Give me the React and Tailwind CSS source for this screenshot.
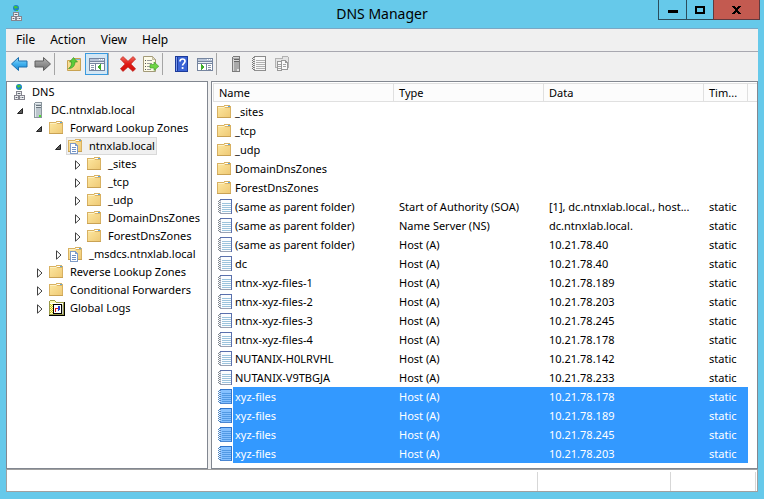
import { useState } from "react";

/* ---------- icons ---------- */

function Icon({ w = 16, h = 16, crisp = true, children }) {
  return (
    <svg
      width={w}
      height={h}
      viewBox={`0 0 ${w} ${h}`}
      shapeRendering={crisp ? "crispEdges" : "auto"}
      className="block shrink-0"
      aria-hidden="true"
    >
      {children}
    </svg>
  );
}

function FolderShape() {
  return (
    <>
      <path d="M0 1h7V0h6v1h1v12H0z" fill="#d8b162" />
      <path d="M1 2h6V1h6v11H1z" fill="url(#folderFill)" />
      <rect x="8" y="1" width="3" height="1" fill="#fff" />
      <rect x="11" y="1" width="2" height="1" fill="#5aa5e0" />
      <rect x="1" y="2" width="6" height="1" fill="#fdf0c0" />
      <rect x="8" y="2" width="5" height="1" fill="#dcb360" />
      <rect x="0" y="12" width="14" height="1" fill="#c9a254" />
    </>
  );
}

function FolderIcon() {
  return (
    <Icon>
      <g transform="translate(0 1)">
        <FolderShape />
      </g>
    </Icon>
  );
}

function ZoneIcon() {
  return (
    <Icon>
      <g transform="translate(0 1)">
        <FolderShape />
      </g>
      <path d="M2 5h6v1h1v1h1v9H2z" fill="#7f9cc8" />
      <path d="M3 6h4v2h2v7H3z" fill="#fff" />
      <path d="M4 9h4v1H4zM4 11h4v1H4zM4 13h4v1H4z" fill="#6d8fc4" />
    </Icon>
  );
}

function NetworkIcon() {
  return (
    <Icon>
      <circle cx="8" cy="3" r="3" fill="#1c84c4" shapeRendering="auto" />
      <path d="M6 1h3v1h1v1H8v1H7V3H6zM8 5h2v1H8z" fill="#42bf3f" />
      <path d="M5 7h6v5H5zM3 11h5v5H3zM8 11h6v5H8z" fill="#85858f" />
      <path d="M6 8h4v3H6zM4 12h3v3H4zM9 12h4v3H9z" fill="#eff0f2" />
      <path d="M6 9h4v1H6zM4 13h3v1H4zM9 13h4v1H9z" fill="#b6bac2" />
      <path d="M7 9h2v1H7zM5 13h1v1H5zM11 13h1v1h-1z" fill="#5e6670" />
    </Icon>
  );
}

function ServerIcon({ gray = false }) {
  return (
    <Icon>
      <path d="M5 0h7v16H4V1h1z" fill={gray ? "#7b7b7b" : "#8a959d"} />
      <path d="M5 1h6v14H5z" fill={gray ? "#a9a9a9" : "#bcc6cd"} />
      <path d="M5 1h6v1H5zM5 4h6v1H5zM5 3h1v12H5z" fill={gray ? "#d6d6d6" : "#e6ecef"} />
      <path d="M6 3h5v1H6zM6 5h5v1H6z" fill={gray ? "#666666" : "#6c7780"} />
      <path d="M9 13h2v2H9z" fill={gray ? "#e2e2e2" : "#4de32c"} />
    </Icon>
  );
}

function RecordIcon({ tone = "blue" }) {
  const c = {
    blue: { edge: "#5a70ad", side: "#9aa2b4", page: "#fbfdff", line: "#9cc3dc", ring: "#7d858e", hole: "#c9ced5" },
    selected: { edge: "#2f74cc", side: "#4a86d2", page: "#85c0ff", line: "#5299e4", ring: "#4a84c4", hole: "#a9cdf2" },
    gray: { edge: "#8a8a8a", side: "#8f8f8f", page: "#f8f8f8", line: "#b0b0b0", ring: "#777777", hole: "#d0d0d0" },
  }[tone];
  return (
    <Icon>
      <path d="M3 0h12v15H3z" fill={c.side} />
      <path d="M3 0h12v1H3zM14 1h1v14h-1z" fill={c.edge} />
      <path d="M4 1h10v13H4z" fill={c.page} />
      <path d="M5 4h9v1H5zM5 6h9v1H5zM5 8h9v1H5zM5 10h9v1H5zM5 12h9v1H5z" fill={c.line} />
      <path
        d="M1 2h1v1H1zM1 4h1v1H1zM1 6h1v1H1zM1 8h1v1H1zM1 10h1v1H1zM1 12h1v1H1zM2 1h1v1H2zM2 3h1v1H2zM2 5h1v1H2zM2 7h1v1H2zM2 9h1v1H2zM2 11h1v1H2zM2 13h1v1H2z"
        fill={c.ring}
      />
      <path
        d="M3 2h1v1H3zM3 4h1v1H3zM3 6h1v1H3zM3 8h1v1H3zM3 10h1v1H3zM3 12h1v1H3z"
        fill={c.hole}
      />
    </Icon>
  );
}

function LogsIcon() {
  return (
    <Icon>
      <path d="M1 0h5v1h1v1h8v13H0V1h1z" fill="#9b9b4a" />
      <path d="M15 2h1v14H0v-1h15z" fill="#000" />
      <path d="M1 1h5v1h1v1h7v11H1z" fill="#fffcb0" />
      <path d="M1 3h13v1H1z" fill="#fff" />
      <path
        d="M1 4h1v1H1zM3 4h1v1H3zM2 5h1v1H2zM1 6h1v1H1zM3 6h1v1H3zM2 7h1v1H2zM1 8h1v1H1zM3 8h1v1H3zM2 9h1v1H2zM1 10h1v1H1zM3 10h1v1H3zM2 11h1v1H2zM1 12h1v1H1zM3 12h1v1H3z"
        fill="#c8c020"
      />
      <path d="M4 4h9v10H4z" fill="#000" />
      <path d="M5 5h7v8H5z" fill="#fff" />
      <path d="M6 8h3v1H7v3H6z" fill="#e01818" />
      <path d="M9 6h2v4h-1v1H9z" fill="#2440d0" />
      <path d="M13 5h1v9h-1z" fill="#c9c9c9" />
    </Icon>
  );
}

function ArrowIcon({ forward = false }) {
  return (
    <Icon w={17} h={16} crisp={false}>
      <path
        d={
          forward
            ? "M16.500 8 9.500 1.500V5H1v6h8.500v3.500z"
            : "M.500 8 7.500 1.500V5H16v6H7.500v3.500z"
        }
        fill={forward ? "url(#arrowGray)" : "url(#arrowBlue)"}
        stroke={forward ? "#5f5f5f" : "#1b6fae"}
        strokeLinejoin="round"
      />
    </Icon>
  );
}

function UpFolderIcon() {
  return (
    <Icon crisp={false}>
      <path d="M1.500 4.500h7v-2h6v12h-13z" fill="url(#folderFill)" stroke="#c9a352" />
      <path d="M10 3h4v1h-4z" fill="#7fb3dd" />
      <path
        d="M2.500 12.500C5 11 5.500 9 5.500 6H3.500L7.500 1.500 11.500 6H9c0 3.500-2 6.500-6.500 6.500z"
        fill="#5ccb3a"
        stroke="#2e8a1c"
        strokeWidth=".6"
      />
    </Icon>
  );
}

function ConsoleIcon({ flip = false }) {
  return (
    <Icon>
      <path d="M0 2h16v13H0z" fill="#76859f" />
      <path d="M1 3h14v2H1z" fill="#b9c5d8" />
      <path d="M10 3h1v1h-1zM12 3h1v1h-1zM14 3h1v1h-1z" fill="#fff" />
      <path d="M1 6h14v1H1z" fill="#e8edf4" />
      <path d="M1 8h14v6H1z" fill="#fff" />
      {flip ? (
        <>
          <path d="M9 8h1v6H9z" fill="#76859f" />
          <path d="M11 9h3v1h-3zM11 11h3v1h-3zM11 13h3v1h-3z" fill="#8b97ab" />
          <path d="M4 8h1v1h1v1h1v2H6v1H5v1H4z" fill="#3fae2a" />
        </>
      ) : (
        <>
          <path d="M6 8h1v6H6z" fill="#76859f" />
          <path d="M2 9h3v1H2zM2 11h3v1H2zM2 13h3v1H2z" fill="#8b97ab" />
          <path d="M12 8v6h-1v-1h-1v-1H9v-2h1V9h1V8z" fill="#3fae2a" />
        </>
      )}
    </Icon>
  );
}

function DeleteIcon() {
  return (
    <Icon crisp={false}>
      <path
        d="M3 .6 8 5.300 13 .6 15.600 3 10.900 8 15.600 12.800 13 15.400 8 10.900 3 15.400.4 12.800 5.100 8 .4 3z"
        fill="url(#deleteRed)"
        stroke="#c02620"
        strokeWidth=".7"
        strokeLinejoin="round"
      />
    </Icon>
  );
}

function ExportIcon() {
  return (
    <Icon crisp={false}>
      <path d="M.5.500h9l3 3v12H.5z" fill="#fdfbe9" stroke="#a39a78" />
      <path d="M9.500.500v3h3z" fill="#e5dfc0" stroke="#a39a78" strokeWidth=".6" />
      <path d="M2 4h1v1H2zM2 7h1v1H2zM2 10h1v1H2zM2 13h1v1H2z" fill="#555" />
      <path d="M4 4h5v1H4zM4 7h5v1H4zM4 10h3v1H4zM4 13h4v1H4z" fill="#9a9a9a" />
      <path d="M7 8.500h4V6l4.800 4.300L11 14.500V12H7z" fill="#6fd446" stroke="#3b9a22" strokeWidth=".6" />
    </Icon>
  );
}

function HelpIcon() {
  return (
    <Icon crisp={false}>
      <path d="M1 0h13v16H1z" fill="#1b3a9a" />
      <path d="M4 1h9v14H4z" fill="#3a63d6" />
      <path d="M2 1h1v14H2z" fill="#7f9cf0" />
      <path
        d="M6 5.500C6 3.600 7 3 8.500 3s2.500.9 2.500 2.300c0 2-2.400 2-2.400 4.200"
        fill="none"
        stroke="#fff"
        strokeWidth="1.700"
      />
      <circle cx="8.600" cy="12" r="1.100" fill="#fff" />
    </Icon>
  );
}

function DocumentsIcon() {
  return (
    <Icon>
      <path d="M1 2h7V0h6v1h1v11H1z" fill="#b2b2b2" />
      <path d="M2 3h7V1h5v10H2z" fill="#e4e4e4" />
      <path d="M3 5h5v10H3zM7 4h5v1h1v1h1v8H7z" fill="#989898" />
      <path d="M8 5h3v2h2v6H8zM4 6h3v8H4z" fill="#fafafa" />
      <path d="M4 8h3v1H4zM4 10h3v1H4zM4 12h3v1H4zM9 8h3v1H9zM9 10h3v1H9z" fill="#a4a4a4" />
    </Icon>
  );
}

function Gradients() {
  return (
    <svg width="0" height="0" className="absolute" aria-hidden="true">
      <defs>
        <linearGradient id="folderFill" x1="0" y1="0" x2="1" y2="1">
          <stop offset="0" stopColor="#fde7a0" />
          <stop offset="1" stopColor="#efca76" />
        </linearGradient>
        <linearGradient id="arrowBlue" x1="0" y1="0" x2="0" y2="1">
          <stop offset="0" stopColor="#9ddcf8" />
          <stop offset=".5" stopColor="#3fb0ee" />
          <stop offset="1" stopColor="#1c87d2" />
        </linearGradient>
        <linearGradient id="arrowGray" x1="0" y1="0" x2="0" y2="1">
          <stop offset="0" stopColor="#b5b5b5" />
          <stop offset="1" stopColor="#6e6e6e" />
        </linearGradient>
        <linearGradient id="deleteRed" x1="0" y1="0" x2="0" y2="1">
          <stop offset="0" stopColor="#f26a5e" />
          <stop offset=".5" stopColor="#e11b14" />
          <stop offset="1" stopColor="#cf120d" />
        </linearGradient>
      </defs>
    </svg>
  );
}

/* ---------- data ---------- */

const tree = {
  label: "DNS",
  Icon: NetworkIcon,
  children: [
    {
      label: "DC.ntnxlab.local",
      Icon: ServerIcon,
      expanded: true,
      children: [
        {
          label: "Forward Lookup Zones",
          Icon: FolderIcon,
          expanded: true,
          children: [
            {
              label: "ntnxlab.local",
              Icon: ZoneIcon,
              expanded: true,
              selected: true,
              children: [
                { label: "_sites", Icon: FolderIcon },
                { label: "_tcp", Icon: FolderIcon },
                { label: "_udp", Icon: FolderIcon },
                { label: "DomainDnsZones", Icon: FolderIcon },
                { label: "ForestDnsZones", Icon: FolderIcon },
              ],
            },
            { label: "_msdcs.ntnxlab.local", Icon: ZoneIcon },
          ],
        },
        { label: "Reverse Lookup Zones", Icon: FolderIcon },
        { label: "Conditional Forwarders", Icon: FolderIcon },
        { label: "Global Logs", Icon: LogsIcon },
      ],
    },
  ],
};

const folders = ["_sites", "_tcp", "_udp", "DomainDnsZones", "ForestDnsZones"];

const records = [
  ["(same as parent folder)", "Start of Authority (SOA)", "[1], dc.ntnxlab.local., host..."],
  ["(same as parent folder)", "Name Server (NS)", "dc.ntnxlab.local."],
  ["(same as parent folder)", "Host (A)", "10.21.78.40"],
  ["dc", "Host (A)", "10.21.78.40"],
  ["ntnx-xyz-files-1", "Host (A)", "10.21.78.189"],
  ["ntnx-xyz-files-2", "Host (A)", "10.21.78.203"],
  ["ntnx-xyz-files-3", "Host (A)", "10.21.78.245"],
  ["ntnx-xyz-files-4", "Host (A)", "10.21.78.178"],
  ["NUTANIX-H0LRVHL", "Host (A)", "10.21.78.142"],
  ["NUTANIX-V9TBGJA", "Host (A)", "10.21.78.233"],
  ["xyz-files", "Host (A)", "10.21.78.178", true],
  ["xyz-files", "Host (A)", "10.21.78.189", true],
  ["xyz-files", "Host (A)", "10.21.78.245", true],
  ["xyz-files", "Host (A)", "10.21.78.203", true],
];

/* ---------- window parts ---------- */

function TitleBar() {
  return (
    <header className="grid h-7 grid-cols-[1fr_auto_1fr] px-1">
      <div className="pt-[5px] pl-1">
        <NetworkIcon />
      </div>
      <h1 className="text-[14px] leading-7">DNS Manager</h1>
      <div className="flex h-5 justify-end">
        <button
          aria-label="Minimize"
          className="flex w-7 items-center justify-center border-b border-l border-[#2b4d5c]"
        >
          <span className="mt-1 h-[3px] w-2.5 bg-black" />
        </button>
        <button
          aria-label="Maximize"
          className="flex w-[27px] items-center justify-center border-b border-l border-[#2b4d5c]"
        >
          <span className="h-2 w-2.5 border-2 border-black" />
        </button>
        <button
          aria-label="Close"
          className="flex w-[47px] items-center justify-center border-x border-b border-[#5f3a3f] bg-[#c35a50]"
        >
          <Icon w={9} h={8}>
            <path
              d="M0 0h3v1h1v1h1V1h1V0h3v1H8v1H7v1H6v2h1v1h1v1h1v1H6V7H5V6H4v1H3v1H0V7h1V6h1V5h1V3H2V2H1V1H0z"
              fill="#000"
            />
          </Icon>
        </button>
      </div>
    </header>
  );
}

function ToolButton({ label, active, children }) {
  return (
    <button
      aria-label={label}
      className={
        "flex h-[22px] w-[23px] items-center justify-center border " +
        (active ? "border-[#3a9ade] bg-[#d3e7f5]" : "border-transparent")
      }
    >
      {children}
    </button>
  );
}

function Separator() {
  return <span className="mr-[7px] h-[22px] w-px bg-[#a5a5a5]" />;
}

function Toolbar() {
  return (
    <div role="toolbar" aria-label="Standard" className="flex h-7 pt-px pl-0.5">
      <ToolButton label="Back"><ArrowIcon /></ToolButton>
      <ToolButton label="Forward"><ArrowIcon forward /></ToolButton>
      <Separator />
      <ToolButton label="Up one level"><UpFolderIcon /></ToolButton>
      <ToolButton label="Show console tree" active><ConsoleIcon /></ToolButton>
      <Separator />
      <ToolButton label="Delete"><DeleteIcon /></ToolButton>
      <ToolButton label="Export list"><ExportIcon /></ToolButton>
      <Separator />
      <ToolButton label="Help"><HelpIcon /></ToolButton>
      <ToolButton label="Show action pane"><ConsoleIcon flip /></ToolButton>
      <Separator />
      <ToolButton label="New server"><ServerIcon gray /></ToolButton>
      <ToolButton label="New record"><RecordIcon tone="gray" /></ToolButton>
      <ToolButton label="New zone"><DocumentsIcon /></ToolButton>
    </div>
  );
}

function Expander({ open, onClick, label }) {
  return (
    <button
      aria-label={`${open ? "Collapse" : "Expand"} ${label}`}
      onClick={onClick}
      className="flex h-[18px] w-3 items-center pt-0.5"
    >
      <Icon w={8} h={10} crisp={false}>
        {open ? (
          <path d="M6.500 2.500v5h-5z" fill="#595959" stroke="#262626" />
        ) : (
          <path d="M2.500.800v8.400L7 5z" fill="#fff" stroke="#404040" />
        )}
      </Icon>
    </button>
  );
}

function TreeNode({ node, root }) {
  const [open, setOpen] = useState(root || Boolean(node.expanded));
  const NodeIcon = node.Icon;
  return (
    <li>
      <div className="flex h-[18px]">
        {!root && <Expander open={open} label={node.label} onClick={() => setOpen(!open)} />}
        <button
          className={
            "flex items-center gap-[5px] border px-px whitespace-nowrap " +
            (node.selected ? "border-[#d9d9d9] bg-[#f0f0f0]" : "border-transparent")
          }
        >
          <NodeIcon />
          <span>{node.label}</span>
        </button>
      </div>
      {open && node.children && (
        <ul className={root ? "pl-[7px]" : "pl-[19px]"}>
          {node.children.map((child) => (
            <TreeNode key={child.label} node={child} />
          ))}
        </ul>
      )}
    </li>
  );
}

function Row({ icon, name, type, data, time, selected }) {
  const cell = selected ? "bg-[#3399ff] pl-[5px] text-white" : "pl-[5px]";
  return (
    <tr className="h-[19px]">
      <td>
        <div className="flex h-[19px] items-center pl-1">
          {icon}
          <span
            className={"h-[19px] flex-1 pl-0.5 " + (selected ? "bg-[#3399ff] text-white" : "")}
          >
            {name}
          </span>
        </div>
      </td>
      <td className={cell}>{type}</td>
      <td className={cell}>{data}</td>
      <td className={cell}>{time}</td>
      <td />
    </tr>
  );
}

function RecordList() {
  const head = "border-r border-y border-[#e0e0e0] bg-[#fcfcfc] pl-[5px] text-left font-normal";
  return (
    <table className="w-full table-fixed border-separate border-spacing-0 leading-[19px] whitespace-nowrap">
      <colgroup>
        <col className="w-[181px]" />
        <col className="w-[150px]" />
        <col />
        <col className="w-11" />
        <col className="w-[9px]" />
      </colgroup>
      <thead>
        <tr className="h-[19px] leading-[17px]">
          <th className={head + " border-l"}>Name</th>
          <th className={head}>Type</th>
          <th className={head}>Data</th>
          <th className={head}>Tim...</th>
          <td className="border-y border-[#e0e0e0] bg-[#fcfcfc]" />
        </tr>
      </thead>
      <tbody>
        {folders.map((name) => (
          <Row key={name} icon={<FolderIcon />} name={name} />
        ))}
        {records.map(([name, type, data, selected], i) => (
          <Row
            key={i}
            icon={<RecordIcon tone={selected ? "selected" : "blue"} />}
            name={name}
            type={type}
            data={data}
            time="static"
            selected={selected}
          />
        ))}
      </tbody>
    </table>
  );
}

export default function App() {
  return (
    <div className="flex min-h-screen flex-col bg-[#66c9ea] font-['Noto_Sans','Open_Sans',sans-serif] text-[11px] text-black">
      <Gradients />
      <TitleBar />
      <div className="mx-1.5 mb-[7px] flex flex-1 flex-col border-t border-[#7aa7c4] bg-[#f0f0f0]">
        <nav
          aria-label="Menu bar"
          className="flex h-[23px] border-b border-[#a8a8b0] pl-0.5 text-[12px]"
        >
          {["File", "Action", "View", "Help"].map((item) => (
            <button key={item} className="pr-[7px] pl-2">
              {item}
            </button>
          ))}
        </nav>
        <Toolbar />
        <main className="flex flex-1 gap-[3px] pt-px">
          <section
            aria-label="Console tree"
            className="w-[202px] shrink-0 overflow-hidden border border-[#828790] bg-white pt-px pl-0.5"
          >
            <ul>
              <TreeNode node={tree} root />
            </ul>
          </section>
          <section
            aria-label="Records"
            className="min-w-0 flex-1 border border-[#828790] bg-white pt-px pb-[5px] pl-px"
          >
            <RecordList />
          </section>
        </main>
        <footer className="flex h-[23px] border border-[#a0a0a0] bg-white pt-0.5">
          <span className="flex-1" />
          <span className="w-[133px] border-l border-[#d7d7d7]" />
          <span className="w-[85px] border-l border-[#d7d7d7]" />
          <span className="w-0.5 border-l border-[#d7d7d7]" />
        </footer>
      </div>
    </div>
  );
}
